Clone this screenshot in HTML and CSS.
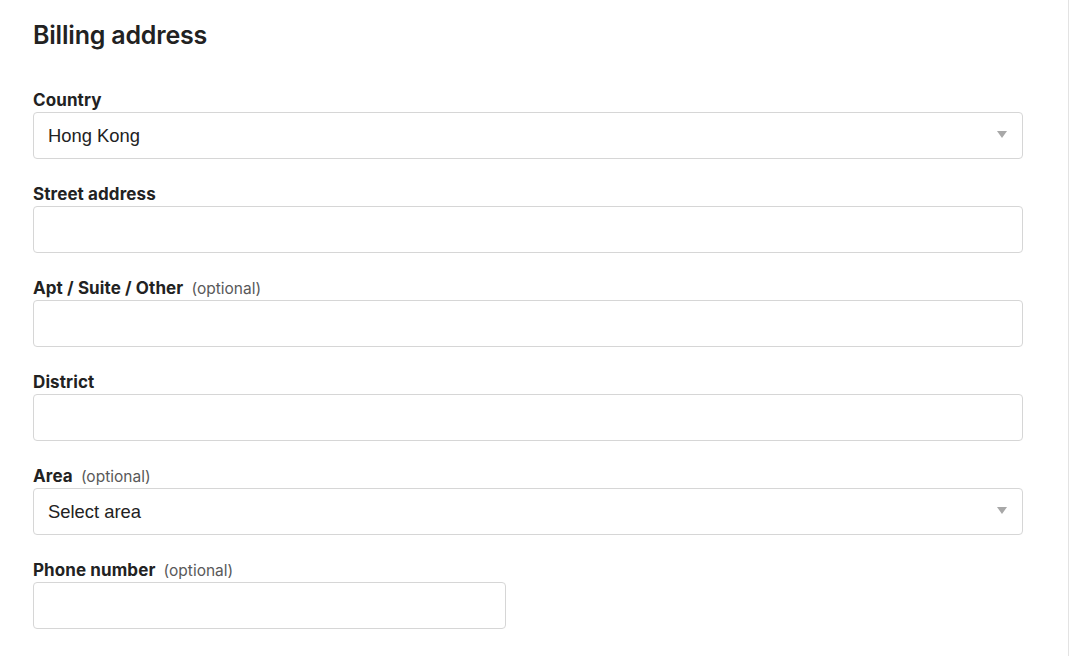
FILE: index.html
```html
<!DOCTYPE html>
<html lang="en">
<head>
<meta charset="utf-8">
<title>Billing address</title>
<link rel="stylesheet" href="styles.css">
</head>
<body>
<div class="page">
  <section class="panel">
    <h2 class="title">Billing address</h2>
    <form class="form">
      <div class="field">
        <label class="label">Country</label>
        <div class="select">
          <span class="value">Hong Kong</span>
          <span class="arrow"></span>
        </div>
      </div>
      <div class="field">
        <label class="label">Street address</label>
        <div class="input"></div>
      </div>
      <div class="field">
        <label class="label">Apt / Suite / Other <span class="opt">(optional)</span></label>
        <div class="input"></div>
      </div>
      <div class="field">
        <label class="label">District</label>
        <div class="input"></div>
      </div>
      <div class="field">
        <label class="label">Area <span class="opt">(optional)</span></label>
        <div class="select">
          <span class="value">Select area</span>
          <span class="arrow"></span>
        </div>
      </div>
      <div class="field">
        <label class="label">Phone number <span class="opt">(optional)</span></label>
        <div class="input input-short"></div>
      </div>
    </form>
  </section>
</div>
</body>
</html>
```

FILE: styles.css
```css
html, body {
  margin: 0;
  padding: 0;
  background: #ffffff;
}
body {
  font-family: "Inter", "Liberation Sans", sans-serif;
  color: #222222;
}
.page {
  display: flex;
}
.panel {
  width: 990px;
  padding: 20px 45px 0 33px;
  border-right: 1px solid #e3e3e3;
  min-height: 636px;
}
.title {
  margin: 0;
  font-size: 25px;
  line-height: 30px;
  font-weight: 600;
  color: #222222;
  letter-spacing: -0.2px;
}
.form {
  display: flex;
  flex-direction: column;
  gap: 25px;
  margin-top: 40px;
}
.field {
  display: flex;
  flex-direction: column;
  gap: 2px;
}
.label {
  height: 20px;
  font-size: 17px;
  line-height: 20px;
  font-weight: 700;
  color: #222222;
  letter-spacing: 0.1px;
}
.opt {
  font-weight: 400;
  font-size: 15.5px;
  line-height: 1;
  color: #595959;
  margin-left: 4px;
  letter-spacing: 0;
}
.input, .select {
  box-sizing: border-box;
  height: 47px;
  border: 1px solid #d6d6d6;
  border-radius: 4px;
  background: #ffffff;
}
.input-short {
  width: 473px;
}
.select {
  display: flex;
  align-items: center;
  justify-content: space-between;
  padding: 1px 15px 0 14px;
}
.value {
  font-family: "Liberation Sans", Arial, sans-serif;
  font-size: 18.4px;
  color: #222222;
}
.arrow {
  width: 0;
  height: 0;
  margin-top: -4px;
  border-left: 5px solid transparent;
  border-right: 5px solid transparent;
  border-top: 7px solid #a8a8a8;
}
```
